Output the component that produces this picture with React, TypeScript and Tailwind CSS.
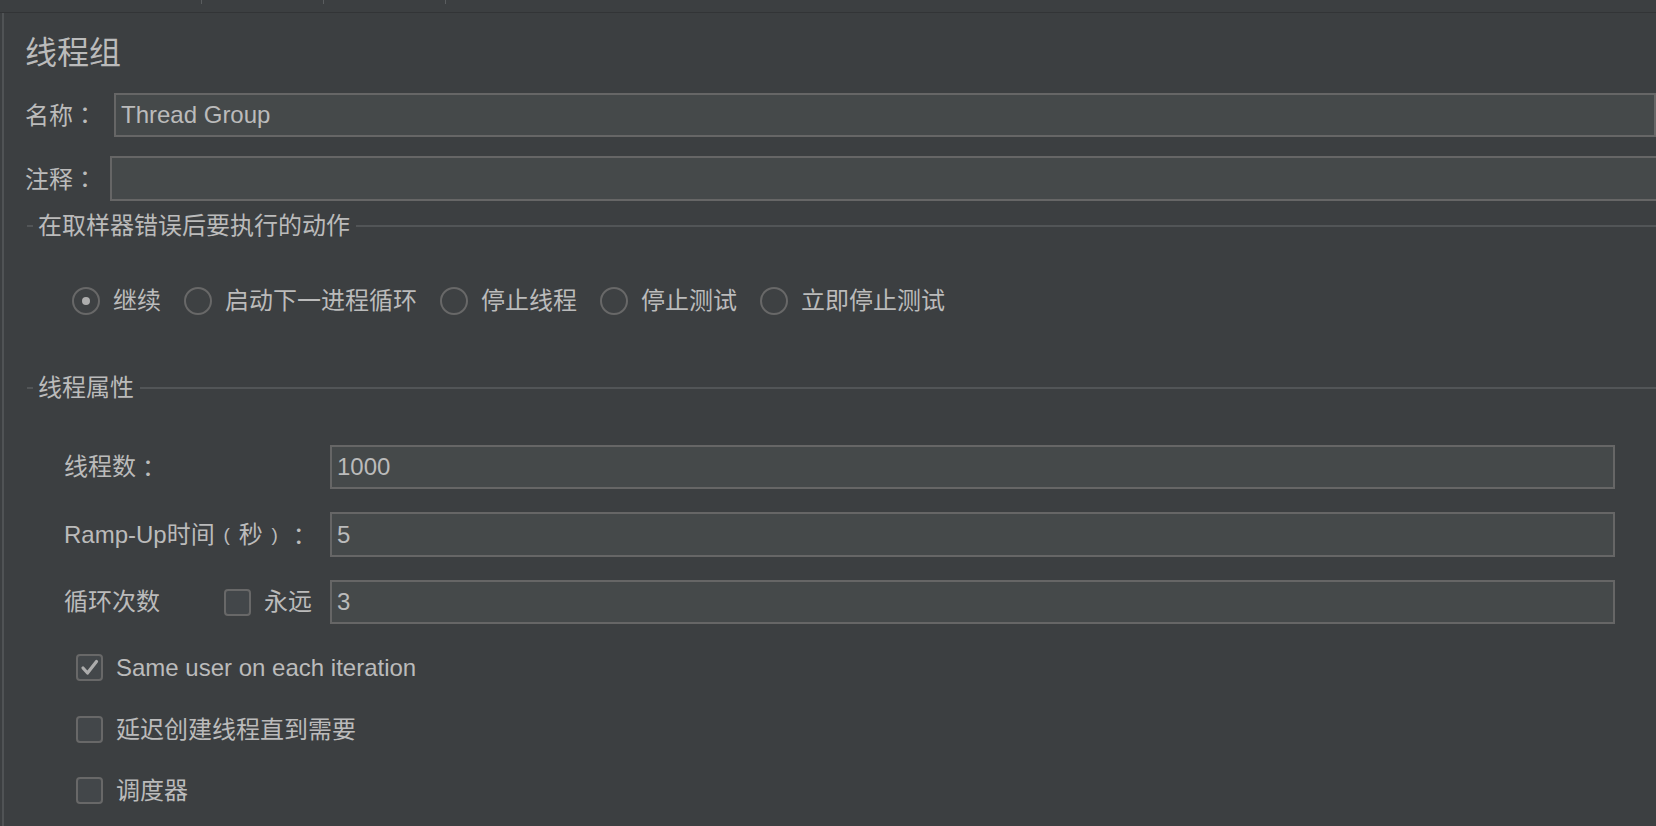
import React from "react";

const FONT = { fontFamily: '"Liberation Sans", "Noto Sans CJK SC", sans-serif' };
const PUNCT = { fontFamily: '"Noto Sans CJK TC", sans-serif' };

// full-width punctuation centred in its box, like the macOS font does
function P({ ch }: { ch: string }) {
  return (
    <span className="inline-block w-[24px] text-center" style={PUNCT}>
      {ch}
    </span>
  );
}

function Paren({ ch }: { ch: string }) {
  return <span className="inline-block w-[24px] text-center text-[19px]">{ch}</span>;
}

function Radio({ checked, label }: { checked?: boolean; label: string }) {
  return (
    <div className="flex items-center">
      <div className="flex h-[28px] w-[28px] items-center justify-center rounded-full border-2 border-[#686868] bg-[#3e4143]">
        {checked && <div className="h-[8px] w-[8px] rounded-full bg-[#adadad]" />}
      </div>
      <span className="ml-[13px] text-[24px] leading-none">{label}</span>
    </div>
  );
}

function CheckBox({ checked }: { checked?: boolean }) {
  return (
    <div className="flex h-[27px] w-[27px] shrink-0 items-center justify-center rounded-[4px] border-2 border-[#686868] bg-[#43474a]">
      {checked && (
        <svg width="23" height="23" viewBox="0 0 23 23">
          <path d="M5 12 L9.5 17 L18.5 5.5" fill="none" stroke="#acacac" strokeWidth="3.2" strokeLinecap="round" strokeLinejoin="round" />
        </svg>
      )}
    </div>
  );
}

function Legend({ title }: { title: string }) {
  return (
    <div className="flex h-full items-center">
      <div className="ml-[23px] h-[2px] w-[6px] bg-[#525557]" />
      <span className="ml-[5px] text-[24px] leading-none">{title}</span>
      <div className="ml-[6px] h-[2px] flex-1 bg-[#525557]" />
    </div>
  );
}

function TextField({ value, className }: { value: string; className: string }) {
  return (
    <div className={`flex items-center border-2 border-[#666666] bg-[#45494a] pl-[5px] text-[24px] leading-none ${className}`}>
      {value}
    </div>
  );
}

function PropRow({ label, value, className }: { label: React.ReactNode; value: string; className: string }) {
  return (
    <div className={`ml-[60px] flex items-center ${className}`}>
      <div className="flex w-[266px] shrink-0 items-center text-[24px] leading-none">{label}</div>
      <TextField value={value} className="h-full w-[1285px]" />
    </div>
  );
}

export default function App() {
  return (
    <div className="h-[826px] w-full overflow-hidden bg-[#3c3f41] text-[#bbbbbb]" style={FONT}>
      <div className="relative h-[13px] border-b border-[#323436]">
        <div className="absolute left-[201px] top-0 h-[4px] w-px bg-[#5a5d5f]" />
        <div className="absolute left-[323px] top-0 h-[4px] w-px bg-[#5a5d5f]" />
        <div className="absolute left-[445px] top-0 h-[4px] w-px bg-[#5a5d5f]" />
      </div>
      <div className="flex h-[813px]">
        <div className="ml-[2px] w-[2px] shrink-0 bg-[#505355]" />
        <div className="flex-1 overflow-hidden">
          <div className="flex h-[80px] items-center pl-[21px] text-[32px] leading-none">线程组</div>

          <div className="flex h-[44px] items-center pl-[21px]">
            <span className="w-[89px] shrink-0 text-[24px] leading-none">
              名称<P ch="：" />
            </span>
            <TextField value="Thread Group" className="h-full flex-1" />
          </div>

          <div className="mt-[19px] flex h-[45px] items-center pl-[21px]">
            <span className="w-[85px] shrink-0 text-[24px] leading-none">
              注释<P ch="：" />
            </span>
            <TextField value="" className="h-full w-[1600px] shrink-0" />
          </div>

          <div className="h-[50px]">
            <Legend title="在取样器错误后要执行的动作" />
          </div>

          <div className="ml-[68px] flex h-[100px] items-center gap-[23px]">
            <Radio checked label="继续" />
            <Radio label="启动下一进程循环" />
            <Radio label="停止线程" />
            <Radio label="停止测试" />
            <Radio label="立即停止测试" />
          </div>

          <div className="h-[74px]">
            <Legend title="线程属性" />
          </div>

          <PropRow
            label={
              <>
                线程数<P ch="：" />
              </>
            }
            value="1000"
            className="mt-[20px] h-[44px]"
          />
          <PropRow
            label={
              <>
                Ramp-Up时间<Paren ch="(" />秒<Paren ch=")" />
                <P ch="：" />
              </>
            }
            value="5"
            className="mt-[23px] h-[45px]"
          />
          <PropRow
            label={
              <>
                <span className="w-[160px]">循环次数</span>
                <CheckBox />
                <span className="ml-[13px]">永远</span>
              </>
            }
            value="3"
            className="mt-[23px] h-[44px]"
          />

          <div className="ml-[72px] mt-[30px] flex h-[27px] items-center">
            <CheckBox checked />
            <span className="ml-[13px] text-[24px] leading-none">Same user on each iteration</span>
          </div>
          <div className="ml-[72px] mt-[35px] flex h-[27px] items-center">
            <CheckBox />
            <span className="ml-[13px] text-[24px] leading-none">延迟创建线程直到需要</span>
          </div>
          <div className="ml-[72px] mt-[34px] flex h-[27px] items-center">
            <CheckBox />
            <span className="ml-[13px] text-[24px] leading-none">调度器</span>
          </div>
        </div>
      </div>
    </div>
  );
}
